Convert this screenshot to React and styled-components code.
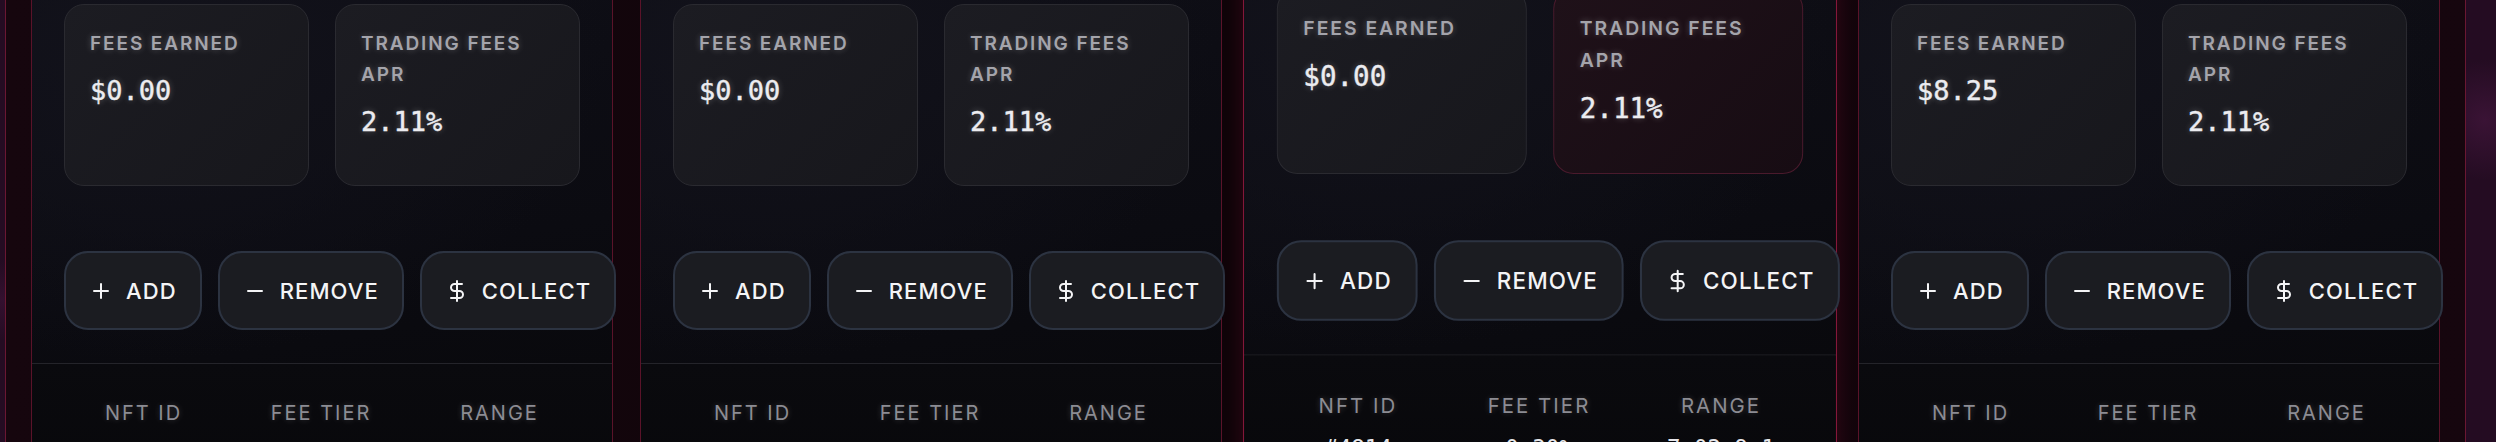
import React from 'react'
import styled, { createGlobalStyle, css } from 'styled-components'
import { Plus, Minus, DollarSign } from 'lucide-react'

const GlobalStyle = createGlobalStyle`
  html, body {
    margin: 0;
    padding: 0;
    background: #1d0a1b;
    overflow: hidden;
  }
  body {
    font-family: Inter, 'Noto Sans', sans-serif;
    -webkit-font-smoothing: antialiased;
  }
  * { box-sizing: border-box; }
`

const Page = styled.div`
  width: 2496px;
  height: 442px;
  overflow: hidden;
  padding-left: 5px;
  background:
    radial-gradient(circle at 2485px 120px, #3a1335 0, transparent 60px),
    radial-gradient(circle at 2px 300px, #34102f 0, transparent 40px),
    #240c22;
`

const Board = styled.div`
  width: 2461px;
  margin-top: -50px;
  padding: 25px;
  border: 1px solid #6a1732;
  background: linear-gradient(90deg, #16060e, #0f0409 50%, #16060e);
  display: grid;
  grid-template-columns: repeat(4, 582px);
  gap: 27px;
`

const Card = styled.div`
  border: 1px solid #5a1329;
  background: #07070a;
  display: flex;
  flex-direction: column;
  transform-origin: 50% 561px;
  ${({ $hover }) => $hover && css`
    transform: translateY(-5px) scale(1.02);
    border-color: #a01c45;
    box-shadow: 0 0 18px rgba(160, 20, 60, 0.25);
  `}
`

const Top = styled.div`
  padding: 27px 32px 33px;
  background:
    radial-gradient(ellipse at 20% 20%, #12121b 0, transparent 70%),
    linear-gradient(170deg, #0f0f17 0%, #0b0b11 70%, #09090d 100%);
  border-bottom: 1px solid #24242a;
`

const Stats = styled.div`
  display: grid;
  grid-template-columns: 1fr 1fr;
  gap: 26px;
`

const StatBox = styled.div`
  min-height: 182px;
  padding: 23px 25px;
  border-radius: 20px;
  border: 1.5px solid ${({ $hover }) => ($hover ? '#4a1a2c' : '#2a2a30')};
  background: ${({ $hover }) =>
    $hover
      ? 'linear-gradient(135deg, #1f1119 0%, #170c13 100%)'
      : 'linear-gradient(135deg, #1c1c22 0%, #17171c 100%)'};
`

const StatLabel = styled.div`
  font-size: 19px;
  line-height: 31px;
  font-weight: 600;
  letter-spacing: 0.1em;
  text-transform: uppercase;
  color: #a4a4ab;
  text-shadow: 0 0 6px rgba(255, 255, 255, 0.25);
`

const StatValue = styled.div`
  margin-top: 17px;
  font-family: 'DejaVu Sans Mono', 'Liberation Mono', monospace;
  font-size: 27px;
  line-height: 30px;
  color: #ececf0;
  -webkit-text-stroke: 0.4px currentColor;
  text-shadow: 0 0 6px rgba(255, 255, 255, 0.3);
`

const Actions = styled.div`
  display: flex;
  gap: 16px;
  margin-top: 65px;
`

const ActionButton = styled.button`
  flex: none;
  display: flex;
  align-items: center;
  gap: 13px;
  height: 79px;
  padding: 0 23px;
  border-radius: 24px;
  border: 2px solid #2c3341;
  background: #1b1c21;
  color: #f4f4f6;
  font-family: Inter, 'Noto Sans', sans-serif;
  font-size: 22px;
  font-weight: 500;
  letter-spacing: 0.05em;
  cursor: pointer;
  svg { flex: none; }
`

const Table = styled.div`
  display: grid;
  grid-template-columns: 159px 196px 161px;
  justify-items: center;
  row-gap: 12px;
  padding: 34px 32px 240px;
  background: linear-gradient(180deg, #0a0a0e 0%, #040405 100%);
`

const HeadCell = styled.div`
  font-size: 20px;
  line-height: 30px;
  letter-spacing: 0.1em;
  color: #8c8c93;
  text-transform: uppercase;
  text-shadow: 0 0 6px rgba(255, 255, 255, 0.2);
`

const Cell = styled.div`
  font-family: 'DejaVu Sans Mono', 'Liberation Mono', monospace;
  font-size: 22px;
  line-height: 30px;
  color: #e6e6ea;
`

const positions = [
  { fees: '$0.00', apr: '2.11%', id: '#4812', tier: '0.30%', range: '7.02-9.1' },
  { fees: '$0.00', apr: '2.11%', id: '#4813', tier: '0.30%', range: '7.02-9.1' },
  { fees: '$0.00', apr: '2.11%', id: '#4814', tier: '0.30%', range: '7.02-9.1', hover: true },
  { fees: '$8.25', apr: '2.11%', id: '#4815', tier: '0.30%', range: '7.02-9.1' },
]

const PositionCard = ({ p }) => (
  <Card $hover={p.hover}>
    <Top>
      <Stats>
        <StatBox>
          <StatLabel>Fees Earned</StatLabel>
          <StatValue>{p.fees}</StatValue>
        </StatBox>
        <StatBox $hover={p.hover}>
          <StatLabel>Trading Fees APR</StatLabel>
          <StatValue>{p.apr}</StatValue>
        </StatBox>
      </Stats>
      <Actions>
        <ActionButton><Plus size={24} strokeWidth={2} />ADD</ActionButton>
        <ActionButton><Minus size={24} strokeWidth={2} />REMOVE</ActionButton>
        <ActionButton><DollarSign size={24} strokeWidth={2} />COLLECT</ActionButton>
      </Actions>
    </Top>
    <Table>
      <HeadCell>NFT ID</HeadCell>
      <HeadCell>Fee Tier</HeadCell>
      <HeadCell>Range</HeadCell>
      <Cell>{p.id}</Cell>
      <Cell>{p.tier}</Cell>
      <Cell>{p.range}</Cell>
    </Table>
  </Card>
)

export default function App() {
  return (
    <>
      <GlobalStyle />
      <Page>
        <Board>
          {positions.map((p, i) => (
            <PositionCard key={i} p={p} />
          ))}
        </Board>
      </Page>
    </>
  )
}
